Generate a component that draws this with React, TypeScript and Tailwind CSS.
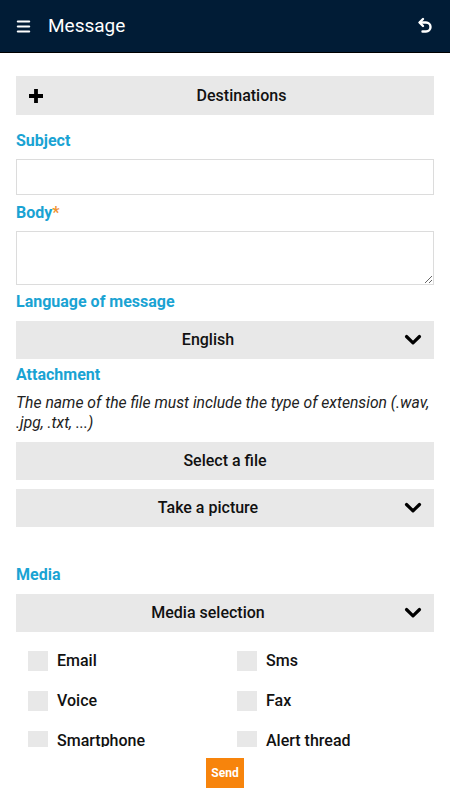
import { Menu } from 'lucide-react';

const Chevron = () => (
    <svg width="18" height="12" viewBox="0 0 18 12" className="absolute right-[12px] top-1/2 -translate-y-1/2">
        <path d="M2.5 2.5 L9 8.8 L15.5 2.5" fill="none" stroke="#000" strokeWidth="3.2" strokeLinecap="round" strokeLinejoin="round" />
    </svg>
);

const GreyButton = ({ label, chevron, className = '' }: { label: string; chevron?: boolean; className?: string }) => (
    <div
        className={`relative flex items-center justify-center h-[38px] bg-[#e8e8e8] text-[16px] font-medium text-[#111] ${chevron ? 'pr-[34px]' : ''} ${className}`}
    >
        {label}
        {chevron && <Chevron />}
    </div>
);

const Label = ({ children, className = '' }: { children: React.ReactNode; className?: string }) => (
    <div className={`text-[16px] leading-5 font-bold text-[#1aa3d3] ${className}`}>{children}</div>
);

const media = ['Email', 'Sms', 'Voice', 'Fax', 'Smartphone', 'Alert thread'];

export default function App() {
    return (
        <div className="w-[450px] h-[800px] bg-white flex flex-col font-['Roboto',sans-serif] overflow-hidden">
            <header className="h-[53px] shrink-0 bg-[#011c36] border-b border-black flex items-center px-4 text-white">
                <Menu size={17} strokeWidth={3} className="-ml-[1px]" />
                <span className="ml-[16px] text-[19px]">Message</span>
                <svg width="16" height="18" viewBox="0 0 16 18" className="ml-auto mr-[1px]">
                    <path d="M6 2 L2.5 5.5 L6 9" fill="none" stroke="#fff" strokeWidth="2.4" strokeLinecap="round" strokeLinejoin="round" />
                    <path d="M3 5.5 H9 a4.5 4.5 0 0 1 0 9 H5.5" fill="none" stroke="#fff" strokeWidth="2.4" strokeLinecap="round" />
                </svg>
            </header>

            <main className="h-[694px] shrink-0 overflow-hidden px-4 pt-[23px]">
                <div className="relative flex items-center justify-center h-[39px] pl-[33px] bg-[#e8e8e8] text-[16px] font-medium text-[#111]">
                    <svg width="16" height="16" viewBox="0 0 16 16" className="absolute left-[12px] top-1/2 -translate-y-1/2">
                        <path d="M8 1 V15 M1 8 H15" stroke="#000" strokeWidth="3.8" />
                    </svg>
                    Destinations
                </div>

                <Label className="mt-4">Subject</Label>
                <input className="mt-2 block w-full h-[36px] border border-[#dcdcdc] outline-none px-2" />

                <Label className="mt-2">
                    Body<span className="text-[#f0922e]">*</span>
                </Label>
                <textarea className="mt-2 block w-full h-[54px] border border-[#dcdcdc] outline-none px-2" />

                <Label className="mt-[7px]">Language of message</Label>
                <GreyButton label="English" chevron className="mt-[9px]" />

                <Label className="mt-[6px]">Attachment</Label>
                <p className="mt-2 text-[15.7px] leading-5 italic text-[#222]">
                    The name of the file must include the type of extension (.wav, .jpg, .txt, ...)
                </p>
                <GreyButton label="Select a file" className="mt-[9px]" />
                <GreyButton label="Take a picture" chevron className="mt-[9px]" />

                <Label className="mt-[38px]">Media</Label>
                <GreyButton label="Media selection" chevron className="mt-[9px]" />

                <div className="grid grid-cols-[209px_1fr] pl-3 mt-[19px] gap-y-5">
                    {media.map((m) => (
                        <label key={m} className="flex items-center h-5 gap-[9px] text-[16px] font-medium text-[#111]">
                            <span className="w-5 h-5 bg-[#e8e8e8] shrink-0" />
                            {m}
                        </label>
                    ))}
                </div>
            </main>

            <div className="flex justify-center pt-[11px]">
                <button className="w-[38px] h-[30px] bg-[#f7840c] text-white text-[12px] font-bold">Send</button>
            </div>
        </div>
    );
}
